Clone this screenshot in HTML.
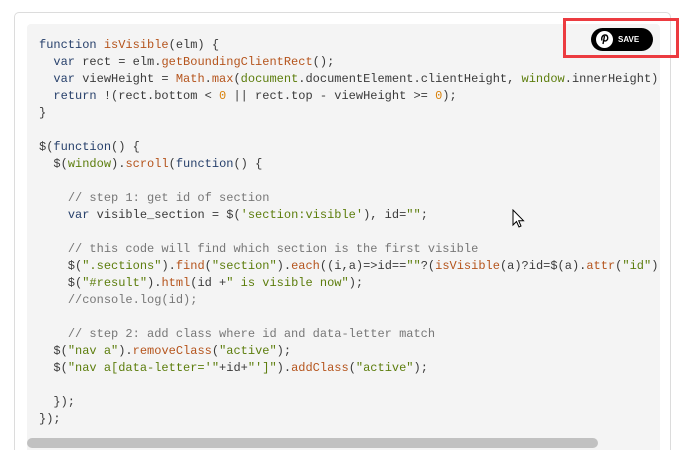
<!DOCTYPE html>
<html><head><meta charset="utf-8"><style>
html,body{margin:0;padding:0;background:#fff;width:688px;height:450px;overflow:hidden;position:relative}
.card{position:absolute;left:14px;top:12px;width:657px;height:438px;border:1px solid #dcdcdc;border-bottom:none;border-radius:5px 5px 0 0;background:#fff;box-sizing:border-box}
.code{position:absolute;left:27px;top:24px;width:633px;height:426px;background:#f4f4f4;border-radius:4px 4px 0 0;overflow:hidden}
pre{margin:0;position:absolute;left:12px;top:13px;font-family:"Liberation Mono",monospace;font-size:12px;line-height:17px;color:#3a3a3a;white-space:pre}
.k{color:#27406b}.f{color:#b5541c}.s{color:#5c7d0c}.c{color:#777}.n{color:#d9820b}
.sb{position:absolute;left:27px;top:438px;width:571px;height:10px;background:#c1c1c1;border-radius:5px}
.red{position:absolute;left:563px;top:18px;width:110px;height:34px;border:3px solid #ec3b40}
.btn{position:absolute;left:591px;top:28px;width:62px;height:23px;background:#000;border-radius:12px;color:#fff;font:bold 8px "Liberation Sans",sans-serif}
.btn span{position:absolute;left:27px;top:7px}
.ic{position:absolute;left:5px;top:3px;width:17px;height:17px;border-radius:50%;background:#fff}
</style></head><body>
<div class="card"></div>
<div class="code"><pre><span class="k">function</span> <span class="f">isVisible</span>(elm) {
  <span class="k">var</span> rect = elm.<span class="f">getBoundingClientRect</span>();
  <span class="k">var</span> viewHeight = <span class="f">Math</span>.<span class="f">max</span>(<span class="s">document</span>.documentElement.clientHeight, <span class="s">window</span>.innerHeight);
  <span class="k">return</span> !(rect.bottom &lt; <span class="n">0</span> || rect.top - viewHeight &gt;= <span class="n">0</span>);
}

$(<span class="k">function</span>() {
  $(<span class="s">window</span>).<span class="f">scroll</span>(<span class="k">function</span>() {

    <span class="c">// step 1: get id of section</span>
    <span class="k">var</span> visible_section = $(<span class="s">'section:visible'</span>), id=<span class="s">""</span>;

    <span class="c">// this code will find which section is the first visible</span>
    $(<span class="s">".sections"</span>).<span class="f">find</span>(<span class="s">"section"</span>).<span class="f">each</span>((i,a)=&gt;id==<span class="s">""</span>?(<span class="f">isVisible</span>(a)?id=$(a).<span class="f">attr</span>(<span class="s">"id"</span>):
    $(<span class="s">"#result"</span>).<span class="f">html</span>(id +<span class="s">" is visible now"</span>);
    <span class="c">//console.log(id);</span>

    <span class="c">// step 2: add class where id and data-letter match</span>
  $(<span class="s">"nav a"</span>).<span class="f">removeClass</span>(<span class="s">"active"</span>);
  $(<span class="s">"nav a[data-letter='"</span>+id+<span class="s">"']"</span>).<span class="f">addClass</span>(<span class="s">"active"</span>);

  });
});</pre></div>
<div class="sb"></div>
<div class="red"></div>
<div class="btn"><div class="ic"><svg width="17" height="17" viewBox="0 0 17 17"><path d="M7 13 L8.5 5 M6 9.5 C5 6 7 4 9 4 C12 4 12.5 8 10.5 9.5 C9.5 10.3 8 10 8 9" fill="none" stroke="#000" stroke-width="1.4"/></svg></div><span>SAVE</span></div>
<svg style="position:absolute;left:512px;top:209px" width="14" height="20" viewBox="0 0 14 20"><path d="M1 1 L1 16 L4.5 12.5 L7 18 L9 17 L6.7 11.7 L11.5 11.7 Z" fill="#fff" stroke="#000" stroke-width="1"/></svg>
</body></html>
